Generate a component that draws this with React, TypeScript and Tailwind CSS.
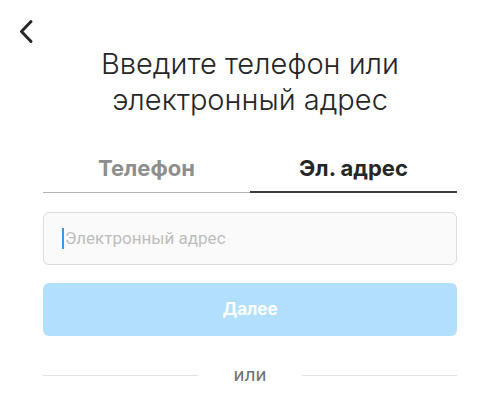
import React from "react";

export default function App() {
  return (
    <div className="w-[500px] h-[405px] overflow-hidden bg-white font-['Roboto',sans-serif] text-[#262626]">
      {/* Back */}
      <div className="pl-[18px] pt-[19px] h-[46px]">
        <svg width="17" height="25" viewBox="0 0 17 25" fill="none">
          <path d="M13 2.5 L3.5 12.5 L13 22.5" stroke="#262626" strokeWidth="3" strokeLinecap="round" strokeLinejoin="round" />
        </svg>
      </div>

      <h1 className="text-center text-[29px] leading-[36px] font-light font-['Inter',sans-serif]">
        Введите телефон или
        <br />
        электронный адрес
      </h1>

      <div className="px-[43px]">
        {/* Tabs */}
        <div className="flex mt-[27px]">
          <button className="flex-1 h-[48px] border-b border-[#b3b3b3] text-[22px] font-bold text-[#8e8e8e] font-['Inter',sans-serif]">
            Телефон
          </button>
          <button className="flex-1 h-[48px] border-b-2 border-[#3c3c3c] text-[22px] font-bold text-[#262626] font-['Inter',sans-serif]">
            Эл. адрес
          </button>
        </div>

        {/* Input */}
        <div className="mt-[19px] h-[53px] rounded-[6px] border border-[#dbdbdb] bg-[#fafafa] flex items-center pl-[18px]">
          <span className="w-[2px] h-[21px] bg-[#3897f0] mr-[1px]" />
          <span className="text-[17px] text-[#bdbdbd]">Электронный адрес</span>
        </div>

        {/* Next */}
        <button className="mt-[18px] w-full h-[53px] rounded-[6px] bg-[#b2dffc] text-white text-[17px] font-bold font-['Inter',sans-serif]">
          Далее
        </button>

        {/* Divider */}
        <div className="flex items-center mt-[25px]">
          <div className="flex-1 h-px bg-[#e2e2e2]" />
          <span className="px-[36px] text-[19px] text-[#737373]">или</span>
          <div className="flex-1 h-px bg-[#e2e2e2]" />
        </div>
      </div>
    </div>
  );
}
